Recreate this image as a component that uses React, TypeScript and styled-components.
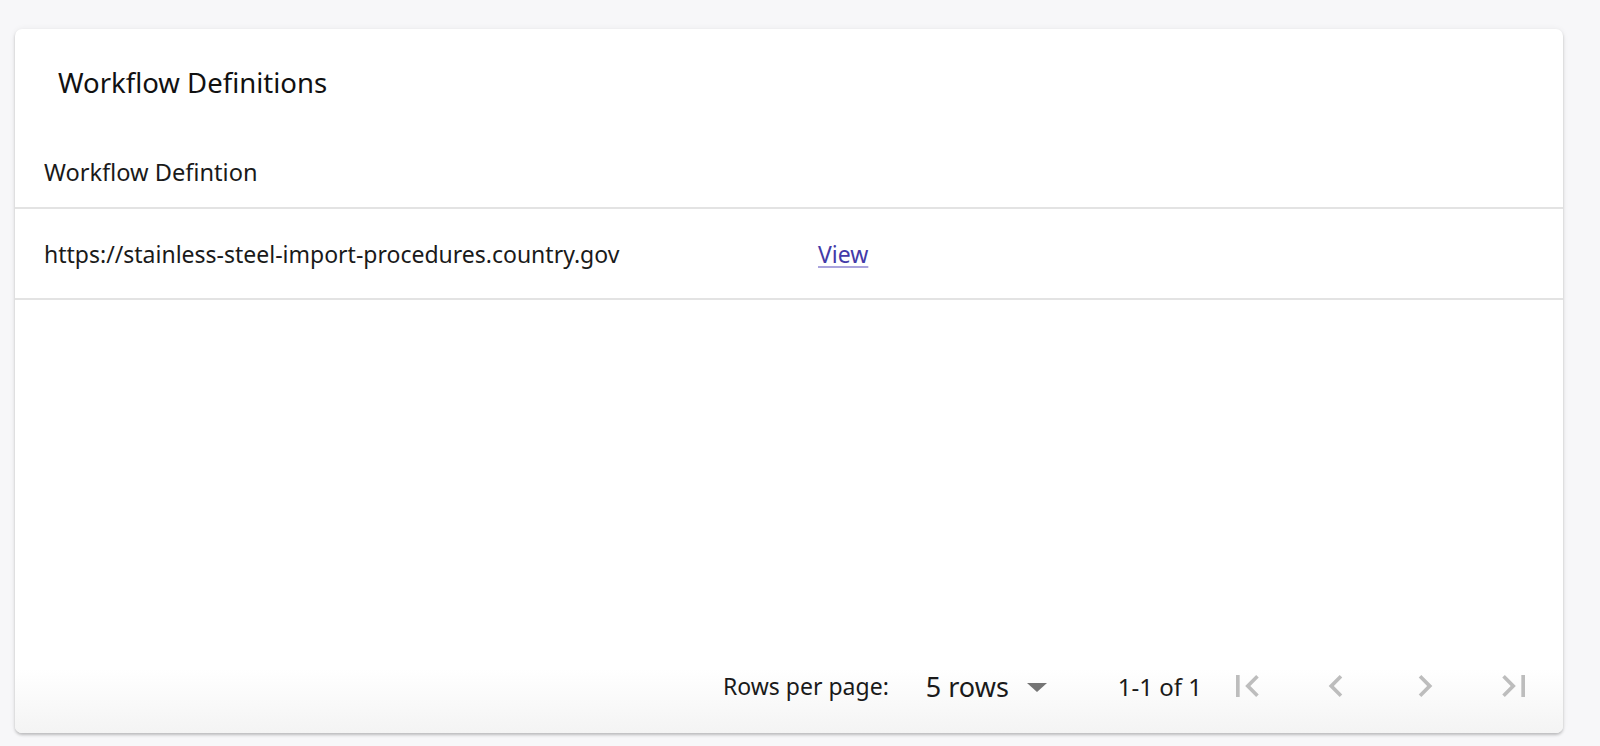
import React from 'react';
import styled, { createGlobalStyle } from 'styled-components';

const GlobalStyle = createGlobalStyle`
  html, body {
    margin: 0;
    padding: 0;
    background: #f7f7f9;
    font-family: "Noto Sans", "Open Sans", sans-serif;
    color: #1a1a1a;
  }
`;

const Page = styled.div`
  padding: 29px 37px 0 15px;
  height: 746px;
  box-sizing: border-box;
`;

const Card = styled.div`
  height: 704px;
  background: #fff;
  border-radius: 7px;
  box-shadow: 0 2px 3px rgba(0, 0, 0, 0.22), 0 0 6px rgba(0, 0, 0, 0.06);
  display: flex;
  flex-direction: column;
  overflow: hidden;
`;

const Title = styled.h2`
  margin: 0;
  height: 107px;
  padding-left: 43px;
  display: flex;
  align-items: center;
  font-size: 27.5px;
  font-weight: 400;
  color: #111;
`;

const Table = styled.table`
  width: 100%;
  border-collapse: collapse;
`;

const Th = styled.th`
  height: 71px;
  padding: 0 0 0 29px;
  text-align: left;
  font-weight: 400;
  font-size: 23.6px;
  border-bottom: 2px solid #e3e3e3;
`;

const Td = styled.td<{ $width?: string }>`
  height: 89px;
  padding: 0 0 0 29px;
  font-size: 23px;
  border-bottom: 2px solid #e3e3e3;
  width: ${p => p.$width || 'auto'};
`;

const Link = styled.a`
  color: #433aa8;
  text-decoration: underline;
  text-decoration-color: #aaa4dd;
  text-underline-offset: 3px;
  cursor: pointer;
`;

const Spacer = styled.div`
  flex: 1;
`;

const Footer = styled.div`
  height: 91px;
  padding-bottom: 3px;
  box-sizing: border-box;
  display: flex;
  align-items: center;
  justify-content: flex-end;
  padding-right: 5px;
  background: linear-gradient(to bottom, #ffffff 0%, #ffffff 30%, #f4f4f4 100%);
`;

const Label = styled.span`
  font-size: 23px;
  margin-right: 37px;
`;

const Select = styled.div`
  display: flex;
  align-items: center;
  gap: 18px;
  font-size: 27px;
  margin-right: 71px;
  cursor: pointer;
`;

const Caret = styled.span`
  width: 0;
  height: 0;
  border-left: 10px solid transparent;
  border-right: 10px solid transparent;
  border-top: 9px solid #757575;
  margin-top: 3px;
`;

const Range = styled.span`
  font-size: 24px;
`;

const PageButton = styled.button`
  width: 89px;
  height: 48px;
  border: 0;
  background: none;
  display: flex;
  align-items: center;
  justify-content: center;
  padding: 0;
  color: #bdbdbd;
`;

const Icon = ({ d }: { d: string }) => (
  <svg width="44" height="44" viewBox="0 0 24 24" fill="currentColor">
    <path d={d} />
  </svg>
);

const FIRST = 'M18.41 16.59L13.82 12l4.59-4.59L17 6l-6 6 6 6zM6 6h2v12H6z';
const PREV = 'M15.41 16.59L10.83 12l4.58-4.59L14 6l-6 6 6 6 1.41-1.41z';
const NEXT = 'M8.59 16.59L13.17 12 8.59 7.41 10 6l6 6-6 6-1.41-1.41z';
const LAST = 'M5.59 7.41L10.18 12l-4.59 4.59L7 18l6-6-6-6zM16 6h2v12h-2z';

export default function App() {
  return (
    <>
      <GlobalStyle />
      <Page>
        <Card>
          <Title>Workflow Definitions</Title>
          <Table>
            <thead>
              <tr>
                <Th colSpan={2}>Workflow Defintion</Th>
              </tr>
            </thead>
            <tbody>
              <tr>
                <Td $width="745px">https://stainless-steel-import-procedures.country.gov</Td>
                <Td>
                  <Link>View</Link>
                </Td>
              </tr>
            </tbody>
          </Table>
          <Spacer />
          <Footer>
            <Label>Rows per page:</Label>
            <Select>
              5 rows
              <Caret />
            </Select>
            <Range>1-1 of 1</Range>
            <PageButton disabled><Icon d={FIRST} /></PageButton>
            <PageButton disabled><Icon d={PREV} /></PageButton>
            <PageButton disabled><Icon d={NEXT} /></PageButton>
            <PageButton disabled><Icon d={LAST} /></PageButton>
          </Footer>
        </Card>
      </Page>
    </>
  );
}
